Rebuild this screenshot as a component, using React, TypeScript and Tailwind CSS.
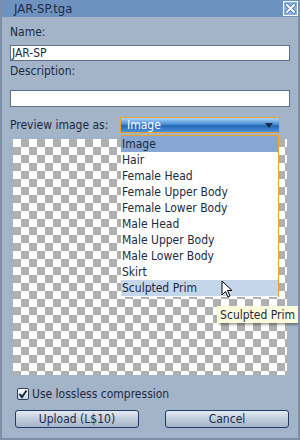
import React from 'react';

const options = [
  'Image',
  'Hair',
  'Female Head',
  'Female Upper Body',
  'Female Lower Body',
  'Male Head',
  'Male Upper Body',
  'Male Lower Body',
  'Skirt',
  'Sculpted Prim',
];

export default function App() {
  return (
    <div
      className="relative w-[300px] h-[440px] overflow-hidden bg-[#a3b3c8] border-l-2 border-r-2 border-b-2 border-[#7d8ea6] text-[#1c2a40] text-[12px] leading-none"
      style={{ fontFamily: '"DejaVu Sans Condensed", "DejaVu Sans", sans-serif', fontStretch: 'condensed' }}
    >
      {/* Title bar */}
      <div className="flex items-center justify-between h-[17px] bg-[#6e92bf] pl-[12px] pr-[0px]">
        <span className="text-[13px] text-[#1b2b47]">JAR-SP.tga</span>
        <div className="flex items-center justify-center w-[15px] h-[15px] border border-white bg-[#8cb3e0]">
          <svg width="11" height="11" viewBox="0 0 11 11">
            <path d="M2 2 L9 9 M9 2 L2 9" stroke="#3d6aa3" strokeWidth="3.5" strokeLinecap="square" />
            <path d="M2 2 L9 9 M9 2 L2 9" stroke="#ffffff" strokeWidth="2" strokeLinecap="square" />
          </svg>
        </div>
      </div>

      <div className="flex flex-col px-[8px]">
        <div className="mt-[9px] h-[12px]">Name:</div>
        <div className="mt-[7px] h-[16px] bg-white border border-[#5d6f88] pl-[1px] flex items-center">JAR-SP</div>
        <div className="mt-[4px] h-[12px]">Description:</div>
        <div className="mt-[13px] h-[17px] bg-white border border-[#5d6f88]" />

        <div className="mt-[10px] flex items-center h-[16px]">
          <span className="w-[110px]">Preview image as:</span>
          <div className="flex items-center justify-between w-[160px] h-[16px] border border-[#e8a426] bg-[linear-gradient(#a9d4fa_0%,#4b8fd6_45%,#2566b4_55%,#4a92dc_100%)] pl-[6px] pr-[6px]">
            <span className="text-white">Image</span>
            <svg width="8" height="5" viewBox="0 0 8 5">
              <path d="M0 0 H8 L4 5 Z" fill="#1b2b47" />
            </svg>
          </div>
        </div>

        {/* Preview area */}
        <div className="mt-[6px] ml-[3px] w-[274px] h-[236px] bg-white bg-[repeating-conic-gradient(#b0b0b0_0_25%,#ffffff_0_50%)] bg-size-[16px_16px]" />

        <label className="mt-[13px] ml-[7px] flex items-center gap-[3px] h-[12px]">
          <span className="flex items-center justify-center w-[12px] h-[12px] rounded-[2px] border border-[#2d3f5a] bg-[linear-gradient(#ffffff,#c9d4e2)]">
            <svg width="10" height="10" viewBox="0 0 10 10">
              <path d="M1.5 5 L4 8 L8.5 1.5" fill="none" stroke="#1b2b47" strokeWidth="2" />
            </svg>
          </span>
          <span>Use lossless compression</span>
        </label>

        <div className="mt-[10px] ml-[5px] flex gap-[26px]">
          <button className="w-[124px] h-[18px] rounded-[3px] border border-[#1f3c63] bg-[linear-gradient(#e4eaf2,#b9c6d8_60%,#a6b5ca)] text-[#1b2b47]">
            Upload (L$10)
          </button>
          <button className="w-[124px] h-[18px] rounded-[3px] border border-[#1f3c63] bg-[linear-gradient(#e4eaf2,#b9c6d8_60%,#a6b5ca)] text-[#1b2b47]">
            Cancel
          </button>
        </div>
      </div>

      {/* Open dropdown list */}
      <div className="absolute left-[119px] top-[135px] w-[158px] bg-white border-t border-r border-[#e8a426] flex flex-col pb-[1px]">
        {options.map((o, i) => (
          <div
            key={o}
            className={
              'h-[16px] flex items-center pl-[1px] ' +
              (i === 0 ? 'bg-[#85a7d2]' : i === 9 ? 'bg-[#c5d5ea]' : '')
            }
          >
            {o}
          </div>
        ))}
      </div>

      {/* Tooltip */}
      <div className="absolute right-[0px] top-[306px] h-[17px] px-[3px] flex items-center whitespace-nowrap bg-[#fbfbdc] shadow-[2px_2px_2px_rgba(0,0,0,0.35)]">
        Sculpted Prim
      </div>

      {/* Mouse cursor */}
      <svg className="absolute left-[219px] top-[280px]" width="12" height="19" viewBox="0 0 12 19">
        <path d="M1 1 V15 L4.5 11.5 L7 17 L9 16 L6.5 10.5 H11 Z" fill="#ffffff" stroke="#000000" strokeWidth="1" />
      </svg>
    </div>
  );
}
